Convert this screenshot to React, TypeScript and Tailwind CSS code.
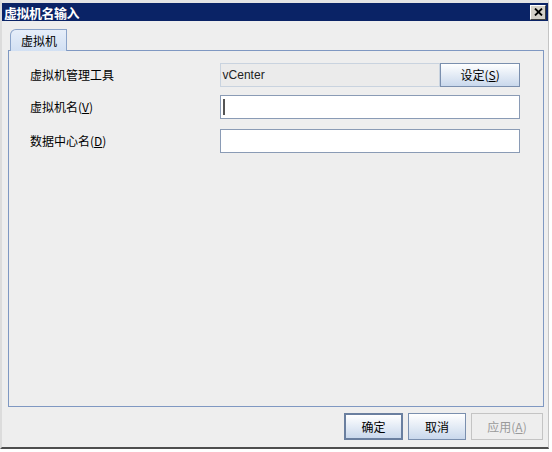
import React from 'react'

const font = { fontFamily: '"Noto Sans CJK SC", "Liberation Sans", sans-serif' }

function Mnemonic({ text, k }: { text: string; k: string }) {
  return (
    <span>
      {text}(<u>{k}</u>)
    </span>
  )
}

function DlgButton({
  children,
  width,
  primary,
  disabled,
}: {
  children: React.ReactNode
  width: string
  primary?: boolean
  disabled?: boolean
}) {
  if (disabled) {
    return (
      <div
        className={`${width} h-[27px] flex items-center justify-center border border-[#c4c4c4] bg-[#eeeeee] text-[12px] text-[#9a9a9a]`}
      >
        {children}
      </div>
    )
  }
  return (
    <div
      className={`${width} h-[27px] flex items-center justify-center bg-gradient-to-b from-[#ffffff] to-[#c9d8ec] text-[12px] text-black ${
        primary ? 'border-2 border-[#6a7f9f]' : 'border border-[#7a8fae]'
      }`}
    >
      {children}
    </div>
  )
}

export default function App() {
  return (
    <div className="w-[552px] h-[452px] bg-white" style={font}>
      <div className="w-[549px] h-[449px] flex flex-col bg-[#eeeeee] border-l-2 border-l-[#dcdcdc] border-t-[3px] border-t-[#e4e4e4] border-r border-r-[#c4c4c4] border-b-2 border-b-[#4e4e4e]">
        {/* title bar */}
        <div className="h-[18px] shrink-0 bg-[#0a2366] flex items-center justify-between pl-[2px] pr-[2px]">
          <span className="text-white font-bold text-[13px] leading-none tracking-[-0.5px]">虚拟机名输入</span>
          <div className="w-[16px] h-[15px] bg-[#d4d0c8] border border-t-white border-l-white border-r-[#404040] border-b-[#404040] flex items-center justify-center">
            <svg width="9" height="8" viewBox="0 0 9 8">
              <path d="M1 0.5 L8 7.5 M8 0.5 L1 7.5" stroke="black" strokeWidth="1.8" />
            </svg>
          </div>
        </div>

        {/* tab + panel */}
        <div className="mt-[8px] ml-[6px] mr-[4px] flex flex-col">
          <div className="ml-[2px] -mb-px relative z-10 w-[57px] h-[22px] flex items-center pl-[10px] text-[12px] text-black bg-gradient-to-b from-[#e6eef9] to-[#d2e0f3] border border-b-0 border-[#8aa3c9] rounded-tl-[6px]">
            虚拟机
          </div>
          <div className="h-[357px] border border-[#7f98c2] flex flex-col pl-[21px] pr-[23px] pt-[12px] text-[12px] text-black">
            <div className="flex items-center h-[24px]">
              <div className="w-[190px]">虚拟机管理工具</div>
              <div className="w-[221px] h-[24px] flex items-center pl-[2px] bg-[#ebebeb] border border-[#c9d3df] text-[#222]" style={{ fontFamily: '"Liberation Sans", sans-serif' }}>
                vCenter
              </div>
              <div className="w-[80px] h-[24px] flex items-center justify-center bg-gradient-to-b from-[#ffffff] to-[#c9d8ec] border border-[#7a8fae]">
                <Mnemonic text="设定" k="S" />
              </div>
            </div>
            <div className="flex items-center h-[24px] mt-[8px]">
              <div className="w-[190px]">
                <Mnemonic text="虚拟机名" k="V" />
              </div>
              <div className="w-[300px] h-[24px] bg-white border border-[#8a9bb5] flex items-center pl-[2px]">
                <div className="w-[2px] h-[16px] bg-[#555]" />
              </div>
            </div>
            <div className="flex items-center h-[24px] mt-[10px]">
              <div className="w-[190px]">
                <Mnemonic text="数据中心名" k="D" />
              </div>
              <div className="w-[300px] h-[24px] bg-white border border-[#8a9bb5]" />
            </div>
          </div>
        </div>

        {/* buttons */}
        <div className="mt-[6px] pr-[5px] flex justify-end gap-[5px]">
          <DlgButton width="w-[59px]" primary>
            确定
          </DlgButton>
          <DlgButton width="w-[58px]">取消</DlgButton>
          <DlgButton width="w-[72px]" disabled>
            <Mnemonic text="应用" k="A" />
          </DlgButton>
        </div>
      </div>
    </div>
  )
}
